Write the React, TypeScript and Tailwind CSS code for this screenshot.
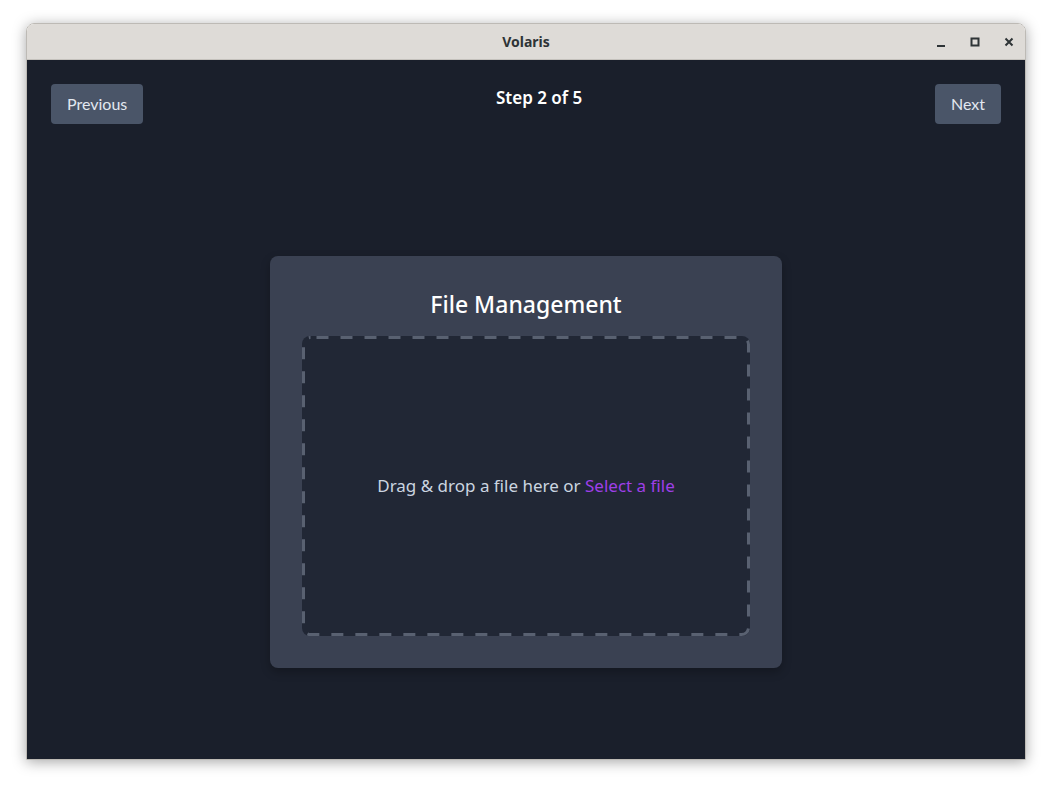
import React from "react";

export default function App() {
  return (
    <div className="w-[1052px] h-[789px] bg-white pt-[23px] pl-[26px]" style={{ fontFamily: '"Noto Sans", "Open Sans", sans-serif' }}>
      <div className="w-[1000px] h-[737px] flex flex-col rounded-t-[8px] shadow-[0_2px_14px_rgba(0,0,0,0.35)] border border-[#bdbab5] overflow-hidden">
        <div className="h-[36px] bg-[#dedbd7] border-b border-[#c4c1bc] flex items-center relative shrink-0">
          <div className="w-full text-center text-[14px] font-bold text-[#2e3436]">Volaris</div>
          <div className="absolute right-[8px] top-0 h-full flex items-center gap-[18px]">
            <svg width="16" height="16" viewBox="0 0 16 16"><rect x="4" y="11" width="8" height="2" fill="#2e3436" /></svg>
            <svg width="16" height="16" viewBox="0 0 16 16"><rect x="4.5" y="4.5" width="7" height="7" fill="none" stroke="#2e3436" strokeWidth="2" /></svg>
            <svg width="16" height="16" viewBox="0 0 16 16"><path d="M4.5 4.5 L11.5 11.5 M11.5 4.5 L4.5 11.5" stroke="#2e3436" strokeWidth="2" /></svg>
          </div>
        </div>
        <div className="flex-1 bg-[#1a1f2b] p-6 flex flex-col">
          <div className="flex justify-between items-start">
            <button className="h-10 px-4 rounded-[4px] bg-[#4a5568] text-[#e2e8f0] text-[16px]" style={{ fontFamily: 'Lato, sans-serif' }}>Previous</button>
            <div className="text-[17px] leading-[28px] font-semibold text-white">Step 2 of 5</div>
            <button className="h-10 px-4 rounded-[4px] bg-[#4a5568] text-[#e2e8f0] text-[16px]" style={{ fontFamily: 'Lato, sans-serif' }}>Next</button>
          </div>
          <div className="flex-1 flex items-center justify-center pt-16">
            <div className="w-[512px] h-[412px] bg-[#3a4152] rounded-[8px] shadow-[0_4px_10px_rgba(0,0,0,0.25)] px-8 pt-[32px] pb-8 flex flex-col">
              <div className="text-[23px] leading-[32px] font-medium text-white text-center mb-[16px]">File Management</div>
              <div className="relative flex-1 rounded-[8px] bg-[#212735] flex items-center justify-center">
                <svg className="absolute inset-0 pointer-events-none" width="448" height="300" viewBox="0 0 448 300">
                  <rect x="1.5" y="1.5" width="445" height="297" rx="7" ry="7" fill="none" stroke="#596171" strokeWidth="3" strokeDasharray="12 12" strokeDashoffset="-6" />
                </svg>
                <span className="text-[17px] text-[#cbd5e0]">
                  Drag &amp; drop a file here or <span className="text-[#9f3fe8]">Select a file</span>
                </span>
              </div>
            </div>
          </div>
        </div>
      </div>
    </div>
  );
}
